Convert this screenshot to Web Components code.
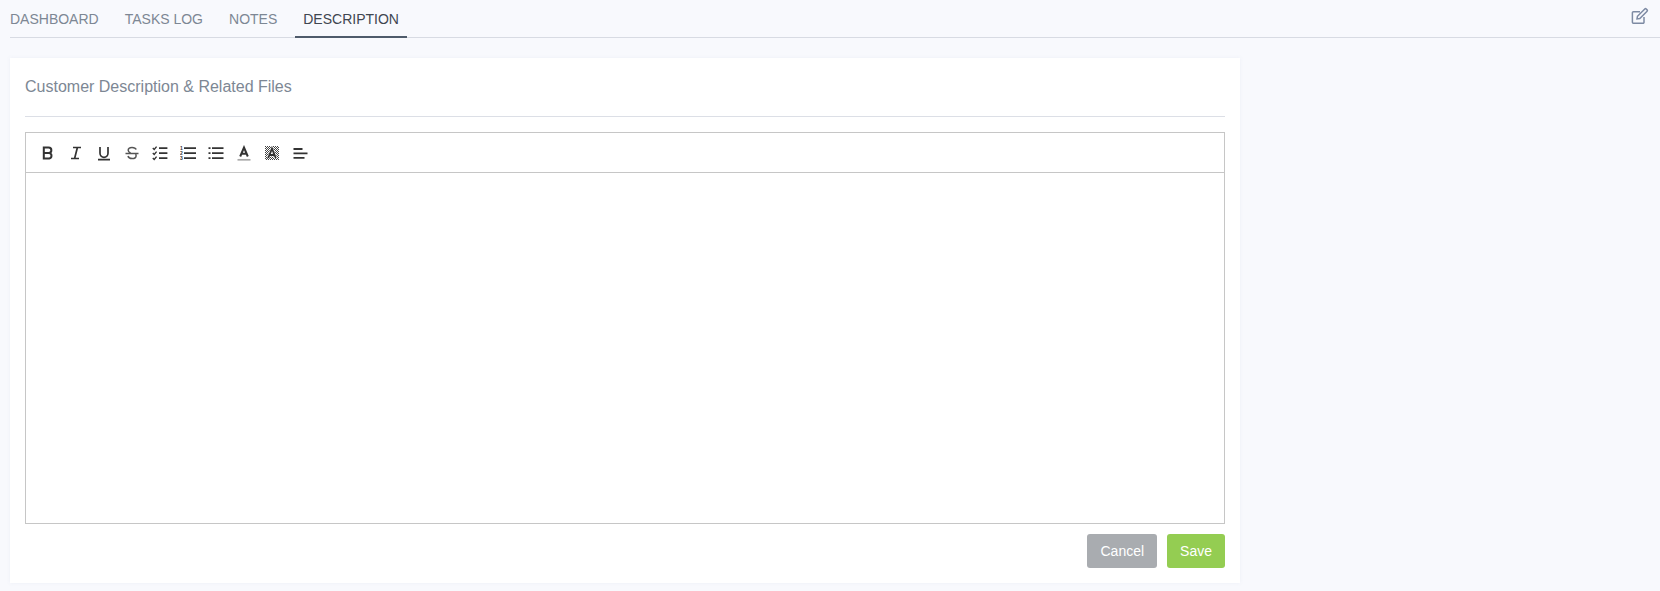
<!DOCTYPE html>
<html>
<head>
<meta charset="utf-8">
<style>
  html, body { margin: 0; height: 100%; background: #f8f9fd; }
  body { font-family: "Liberation Sans", Arial, sans-serif; overflow: hidden; }
</style>
</head>
<body>
<tab-bar>
  <tab-item>DASHBOARD</tab-item>
  <tab-item>TASKS LOG</tab-item>
  <tab-item>NOTES</tab-item>
  <tab-item active>DESCRIPTION</tab-item>
</tab-bar>
<desc-card heading="Customer Description &amp; Related Files">
  <rich-editor></rich-editor>
  <app-button slot="actions" kind="cancel">Cancel</app-button>
  <app-button slot="actions" kind="save">Save</app-button>
</desc-card>

<script>
class TabBar extends HTMLElement {
  constructor() {
    super();
    this.attachShadow({ mode: "open" });
    this.shadowRoot.innerHTML = `
      <style>
        :host { display: flex; justify-content: space-between; margin-left: 10px; height: 38px; box-sizing: border-box; border-bottom: 1px solid #d8dbe3; }
        .tabs { display: flex; gap: 10px; margin-left: -8px; }
        svg { width: 18px; height: 18px; margin: 7px 11px 0 0; }
      </style>
      <div class="tabs"><slot></slot></div>
      <svg viewBox="0 0 18 18" fill="none" stroke="#7d8aa3" stroke-width="1.5">
        <path d="M13 10v5.2a1 1 0 0 1-1 1H2.4a1 1 0 0 1-1-1V5.8a1 1 0 0 1 1-1H9"/>
        <path d="M6.5 9.2 13.8 2a1 1 0 0 1 1.4 0l.9.9a1 1 0 0 1 0 1.4L8.8 11.5l-2.8.4z"/>
      </svg>`;
  }
}
customElements.define("tab-bar", TabBar);

class TabItem extends HTMLElement {
  constructor() {
    super();
    this.attachShadow({ mode: "open" });
    this.shadowRoot.innerHTML = `
      <style>
        :host { display: block; height: 38px; box-sizing: border-box; padding: 11px 8px 0; font-size: 14px; line-height: 16px; color: #7d8794; }
        :host([active]) { color: #3f4650; border-bottom: 2px solid #4f5b6b; }
      </style>
      <slot></slot>`;
  }
}
customElements.define("tab-item", TabItem);

class DescCard extends HTMLElement {
  constructor() {
    super();
    this.attachShadow({ mode: "open" });
    this.shadowRoot.innerHTML = `
      <style>
        :host { display: block; width: 1230px; height: 525px; box-sizing: border-box; margin: 20px 0 0 10px; padding: 0 15px; background: #fff; box-shadow: 0 0 4px rgba(120,130,160,.08); }
        h3 { margin: 0; height: 59px; box-sizing: border-box; padding-top: 19px; font-size: 16px; font-weight: 400; line-height: 20px; color: #7d8794; border-bottom: 1px solid #dcdfe6; }
        .body { margin-top: 15px; }
        .actions { display: flex; justify-content: flex-end; gap: 10px; margin-top: 10px; }
      </style>
      <h3 id="t"></h3>
      <div class="body"><slot></slot></div>
      <div class="actions"><slot name="actions"></slot></div>`;
    this.shadowRoot.getElementById("t").textContent = this.getAttribute("heading");
  }
}
customElements.define("desc-card", DescCard);

const ICONS = [
  `<path d="M3.8 2.5h4.8a2.7 2.7 0 0 1 0 5.5H3.8zM3.8 8h5.4a2.8 2.8 0 0 1 0 5.5H3.8z" stroke-width="2"/>`,
  `<path d="M5 2.5h8M3 13.5h8M9.4 2.5l-2.8 11" stroke-width="1.7"/>`,
  `<path d="M4 2v6.3a4 4 0 0 0 8 0V2M2 14.7h12" stroke-width="1.7"/>`,
  `<path d="M12.2 4.6C11.6 3 10 2.5 8 2.5c-2.2 0-3.8 1-3.8 2.8 0 1.3.8 2.1 2.4 2.7M4 11c.5 1.8 2 2.6 4.1 2.6 2.3 0 4-1 4-2.9 0-.6-.2-1.1-.5-1.5M1.5 8.5h13" stroke="#555" stroke-width="1.5"/>`,
  `<path d="M.8 3l1.4 1.4L4.6 1.6M.8 8l1.4 1.4L4.6 6.6M.8 13l1.4 1.4 2.4-2.8" stroke-width="1.4"/><path d="M7 3.2h8.4M7 8.2h8.4M7 13.2h8.4" stroke-width="1.7"/>`,
  `<path d="M4 3.2h12M4 8.2h12M4 13.2h12" stroke-width="1.7"/><text x="0" y="5" font-size="5" font-family="Liberation Sans" font-weight="700" fill="#333" stroke="none">1</text><text x="0" y="10" font-size="5" font-family="Liberation Sans" font-weight="700" fill="#333" stroke="none">2</text><text x="0" y="15" font-size="5" font-family="Liberation Sans" font-weight="700" fill="#333" stroke="none">3</text>`,
  `<path d="M.5 3.2h2M.5 8.2h2M.5 13.2h2" stroke-width="1.7"/><path d="M4 3.2h11.5M4 8.2h11.5M4 13.2h11.5" stroke-width="1.7"/>`,
  `<path d="M4.2 11.5 8 2.5l3.8 9M5.4 8.8h5.2" stroke-width="2"/><path d="M1.5 14.8h13" stroke="#a9a9a9" stroke-width="1.7"/>`,
  `<rect x="1" y="1" width="14" height="14" fill="url(#dots)" stroke="none"/><path d="M4.2 13 8 3.5 11.8 13M5.4 10h5.2" stroke="#fff" stroke-width="2.8"/><path d="M4.2 13 8 3.5 11.8 13M5.4 10h5.2" stroke-width="1.9"/>`,
  `<path d="M1.5 4h9M1.5 8.4h14M1.5 12.8h11" stroke-width="1.8"/>`
];

class RichEditor extends HTMLElement {
  constructor() {
    super();
    this.attachShadow({ mode: "open" });
    const btns = ICONS.map(p => `<svg viewBox="0 0 16 16" fill="none" stroke="#333">${p}</svg>`).join("");
    this.shadowRoot.innerHTML = `
      <style>
        :host { display: block; border: 1px solid #c6c6c6; }
        .toolbar { display: flex; align-items: center; gap: 12px; height: 40px; box-sizing: border-box; padding: 0 14px; border-bottom: 1px solid #c6c6c6; }
        svg { width: 16px; height: 16px; flex: none; }
        .area { height: 350px; }
      </style>
      <svg width="0" height="0" style="position:absolute"><defs><pattern id="dots" width="2" height="2" patternUnits="userSpaceOnUse"><rect width="1" height="1" fill="#444"/><rect x="1" y="1" width="1" height="1" fill="#444"/></pattern></defs></svg>
      <div class="toolbar">${btns}</div>
      <div class="area"></div>`;
  }
}
customElements.define("rich-editor", RichEditor);

class AppButton extends HTMLElement {
  constructor() {
    super();
    this.attachShadow({ mode: "open" });
    this.shadowRoot.innerHTML = `
      <style>
        :host { display: block; height: 34px; box-sizing: border-box; padding: 0 13px; border-radius: 3px; font-size: 14px; line-height: 34px; color: #fff; }
        :host([kind=cancel]) { background: #a9acb0; }
        :host([kind=save]) { background: #94cd52; }
      </style>
      <slot></slot>`;
  }
}
customElements.define("app-button", AppButton);
</script>
</body>
</html>
